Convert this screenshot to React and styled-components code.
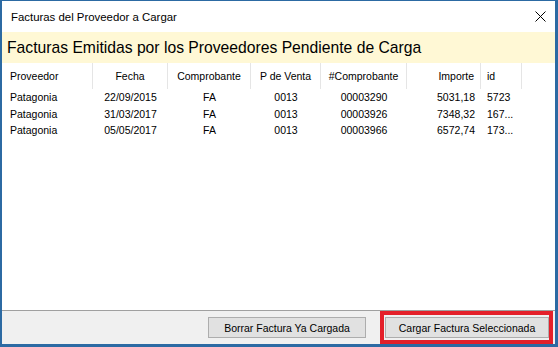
import React from 'react'
import styled, { createGlobalStyle } from 'styled-components'

const GlobalStyle = createGlobalStyle`
  html, body {
    margin: 0;
    padding: 0;
    background: #ffffff;
  }
  body {
    font-family: "Liberation Sans", Arial, sans-serif;
  }
`

const Window = styled.div`
  width: 558px;
  height: 347px;
  box-sizing: border-box;
  border-style: solid;
  border-color: #2c6aa3;
  border-width: 1px 3px 3px 2px;
  background: #ffffff;
  display: flex;
  flex-direction: column;
`

const TitleBar = styled.div`
  height: 31px;
  flex: none;
  display: flex;
  align-items: center;
  justify-content: space-between;
  padding: 0 9px 0 9px;
`

const Title = styled.span`
  font-size: 11.4px;
  color: #000000;
`

const CloseButton = styled.svg`
  width: 11px;
  height: 11px;
  display: block;
`

const Banner = styled.div`
  height: 31px;
  flex: none;
  display: flex;
  align-items: center;
  padding-left: 5px;
  background: #fff8d5;
  font-size: 15.7px;
  color: #000000;
`

const ListView = styled.div`
  flex: 1;
  background: #ffffff;
  border-bottom: 1px solid #a0a0a0;
  font-size: 10.5px;
  color: #000000;
`

const columns = '91px 75px 83px 70px 86px 74px 41px'

const HeaderRow = styled.div`
  display: grid;
  grid-template-columns: ${columns};
  height: 26px;
`

const HeaderCell = styled.div`
  display: flex;
  align-items: center;
  justify-content: ${(props) => props.align || 'flex-start'};
  padding: 0 6px 0 ${(props) => (props.first ? '8px' : '6px')};
  border-right: 1px solid #e5e5e5;
  white-space: nowrap;
`

const Row = styled.div`
  display: grid;
  grid-template-columns: ${columns};
  height: 16.5px;
`

const Cell = styled.div`
  display: flex;
  align-items: center;
  justify-content: ${(props) => props.align || 'flex-start'};
  padding: 0 6px 0 ${(props) => (props.first ? '8px' : '6px')};
  white-space: nowrap;
  overflow: hidden;
`

const Footer = styled.div`
  height: 33px;
  flex: none;
  background: #f0f0f0;
  display: flex;
  justify-content: flex-end;
  align-items: stretch;
  gap: 14px;
  padding-right: 2px;
`

const Button = styled.button`
  font-family: "Liberation Sans", Arial, sans-serif;
  font-size: 10.5px;
  color: #000000;
  background: #e1e1e1;
  border: 1px solid #adadad;
  height: 21px;
  width: ${(props) => props.width}px;
  padding: 0;
  align-self: center;
`

const Highlight = styled.div`
  display: flex;
  align-items: center;
  border: 4px solid #e4202a;
  padding: 0 0 0 1px;
`

const headers = [
  { label: 'Proveedor', align: 'flex-start' },
  { label: 'Fecha', align: 'center' },
  { label: 'Comprobante', align: 'center' },
  { label: 'P de Venta', align: 'center' },
  { label: '#Comprobante', align: 'center' },
  { label: 'Importe', align: 'flex-end' },
  { label: 'id', align: 'flex-start' },
]

const rows = [
  ['Patagonia', '22/09/2015', 'FA', '0013', '00003290', '5031,18', '5723'],
  ['Patagonia', '31/03/2017', 'FA', '0013', '00003926', '7348,32', '167...'],
  ['Patagonia', '05/05/2017', 'FA', '0013', '00003966', '6572,74', '173...'],
]

export default function App() {
  return (
    <>
      <GlobalStyle />
      <Window>
        <TitleBar>
          <Title>Facturas del Proveedor a Cargar</Title>
          <CloseButton viewBox="0 0 11 11">
            <path d="M0.5 0.5 L10.5 10.5 M10.5 0.5 L0.5 10.5" stroke="#000" strokeWidth="1" fill="none" />
          </CloseButton>
        </TitleBar>
        <Banner>Facturas Emitidas por los Proveedores Pendiente de Carga</Banner>
        <ListView>
          <HeaderRow>
            {headers.map((h, i) => (
              <HeaderCell key={h.label} align={h.align} first={i === 0}>
                {h.label}
              </HeaderCell>
            ))}
          </HeaderRow>
          {rows.map((r, ri) => (
            <Row key={ri}>
              {r.map((v, ci) => (
                <Cell key={ci} align={headers[ci].align} first={ci === 0}>
                  {v}
                </Cell>
              ))}
            </Row>
          ))}
        </ListView>
        <Footer>
          <Button width={158}>Borrar Factura Ya Cargada</Button>
          <Highlight>
            <Button width={164}>Cargar Factura Seleccionada</Button>
          </Highlight>
        </Footer>
      </Window>
    </>
  )
}
